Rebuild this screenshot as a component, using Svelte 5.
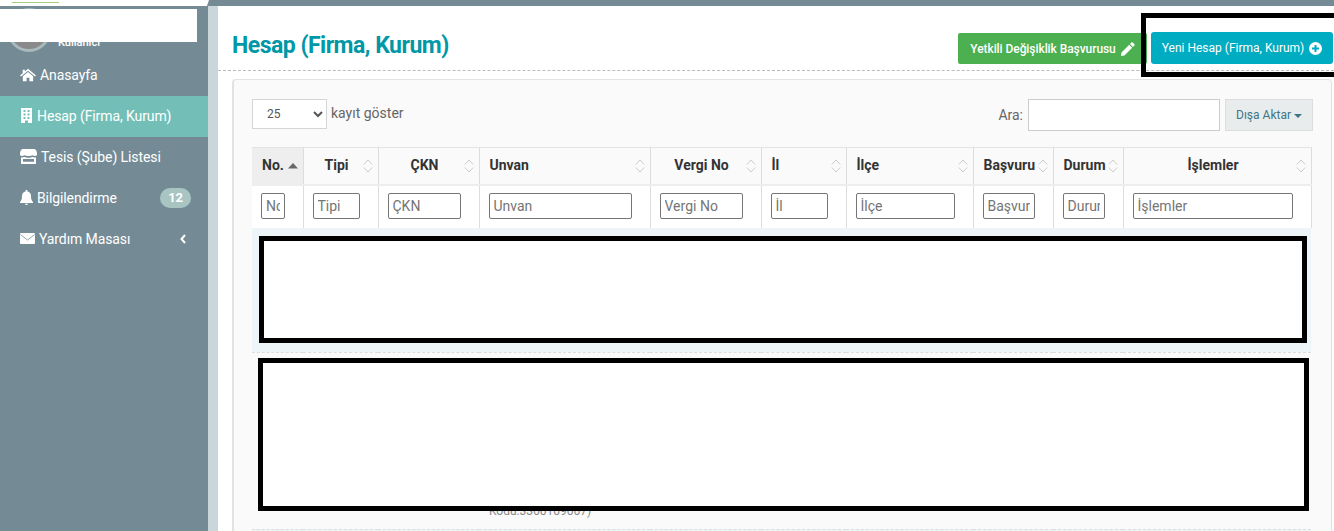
<script>
  const menu = [
    { label: 'Anasayfa', icon: 'home' },
    { label: 'Hesap (Firma, Kurum)', icon: 'building', active: true },
    { label: 'Tesis (Şube) Listesi', icon: 'store' },
    { label: 'Bilgilendirme', icon: 'bell', badge: 12 },
    { label: 'Yardım Masası', icon: 'mail', arrow: true }
  ];

  const columns = [
    { label: 'No.', width: 51, ph: 'No', left: true, sorted: true },
    { label: 'Tipi', width: 75, ph: 'Tipi' },
    { label: 'ÇKN', width: 101, ph: 'ÇKN' },
    { label: 'Unvan', width: 171, ph: 'Unvan', left: true },
    { label: 'Vergi No', width: 111, ph: 'Vergi No' },
    { label: 'İl', width: 85, ph: 'İl', left: true },
    { label: 'İlçe', width: 127, ph: 'İlçe', left: true },
    { label: 'Başvuru', width: 80, ph: 'Başvuru', left: true },
    { label: 'Durum', width: 70, ph: 'Durum', left: true },
    { label: 'İşlemler', width: 188, ph: 'İşlemler' }
  ];
</script>

<div class="page">
  <div class="topbar">
    <div class="brand"><span class="brand-line"></span></div>
  </div>

  <div class="layout">
    <aside class="sidebar">
      <div class="profile">
        <div class="avatar"></div>
        <span class="username">Kullanıcı</span>
      </div>
      <div class="profile-mask"></div>

      <nav>
        {#each menu as item}
          <a class="menu-item" class:active={item.active} href="#top">
            {#if item.icon === 'home'}
              <svg width="16" height="14" viewBox="0 0 18 14"><path d="M9 0l9 7.500-1.200 1.300L9 2.300 1.200 8.800 0 7.500l3-2.500V1h2.500v2z" /><path d="M3.200 8.400L9 3.600l5.800 4.800V14h-4.200v-4H7.400v4H3.200z" /></svg>
            {:else if item.icon === 'building'}
              <svg width="13" height="15" viewBox="0 0 13 15"><path fill-rule="evenodd" d="M1 0h11v15H8V12.500H5V15H1zM3.500 2v2h2V2zm4 0v2h2V2zM3.500 5.500v2h2v-2zm4 0v2h2v-2zM3.500 9v2h2V9zm4 0v2h2V9z" /></svg>
            {:else if item.icon === 'store'}
              <svg width="17" height="15" viewBox="0 0 17 15"><path d="M3 0h11c1.600 0 3 1.800 3 4.500v1.800C15.500 7.300 14 7.300 12.700 6.300 11 7.300 6 7.300 4.300 6.300 3 7.300 1.500 7.300 0 6.300V4.500C0 1.800 1.400 0 3 0z" /><path fill-rule="evenodd" d="M1 8.200c1.100.4 2.300.3 3.300-.2 2 .9 6.400.9 8.400 0 1 .5 2.200.6 3.300.2V15H1zM3 10v2.800h11V10z" /></svg>
            {:else if item.icon === 'bell'}
              <svg width="13" height="15" viewBox="0 0 13 15"><path d="M6.500 0c.6 0 1 .4 1 1v.6C9.600 2 11 3.700 11 6c0 3.500.7 4.800 2 6v1H0v-1c1.300-1.200 2-2.500 2-6 0-2.300 1.400-4 3.500-4.400V1c0-.6.400-1 1-1zM4.800 13.800h3.400c0 .7-.8 1.200-1.700 1.200s-1.700-.5-1.700-1.200z" /></svg>
            {:else}
              <svg width="15" height="11" viewBox="0 0 15 11"><rect width="15" height="11" rx="1" /><path class="fold" d="M.3 1.500L7.500 7l7.200-5.500" /></svg>
            {/if}
            <span>{item.label}</span>
            {#if item.badge}
              <span class="badge">{item.badge}</span>
            {/if}
            {#if item.arrow}
              <svg class="arrow" width="6" height="10" viewBox="0 0 6 10"><path d="M5 1L1.500 5 5 9" /></svg>
            {/if}
          </a>
        {/each}
      </nav>
    </aside>

    <div class="gutter"></div>

    <main class="content">
      <header class="head">
        <h1>Hesap (Firma, Kurum)</h1>
        <div class="actions">
          <button class="btn green">
            Yetkili Değişiklik Başvurusu
            <svg width="14" height="14" viewBox="0 0 14 14"><path d="M10.400.6a1 1 0 0 1 1.400 0l1.600 1.600a1 1 0 0 1 0 1.400L12 5 9 2zM8.200 2.800l3 3-7.700 7.700L0 14l.5-3.500z" /></svg>
          </button>
          <button class="btn teal">
            Yeni Hesap (Firma, Kurum)
            <svg width="13" height="13" viewBox="0 0 13 13"><path fill-rule="evenodd" d="M6.500 0a6.500 6.500 0 1 1 0 13 6.500 6.500 0 0 1 0-13zM5.500 3v2.500H3v2h2.500V10h2V7.500H10v-2H7.500V3z" /></svg>
          </button>
        </div>
      </header>
      <div class="action-mask"></div>

      <section class="card">
        <div class="toolbar">
          <div class="length">
            <select><option>25</option></select>
            <span>kayıt göster</span>
          </div>
          <div class="search">
            <span>Ara:</span>
            <input type="text" />
            <button class="export">Dışa Aktar <i class="caret"></i></button>
          </div>
        </div>

        <table>
          <colgroup>
            {#each columns as col}
              <col style="width: {col.width}px" />
            {/each}
          </colgroup>
          <thead>
            <tr class="titles">
              {#each columns as col}
                <th class:left={col.left} class:sorted={col.sorted}>
                  {col.label}
                  {#if col.sorted}
                    <svg class="sort" width="10" height="6" viewBox="0 0 10 6"><path class="solid" d="M5 0l5 5.500H0z" /></svg>
                  {:else}
                    <svg class="sort" width="10" height="14" viewBox="0 0 10 14"><path d="M.8 5.500L5 1l4.200 4.500M.8 8.500L5 13l4.200-4.500" /></svg>
                  {/if}
                </th>
              {/each}
            </tr>
            <tr class="filters">
              {#each columns as col}
                <td><input type="text" placeholder={col.ph} /></td>
              {/each}
            </tr>
          </thead>
          <tbody>
            <tr class="odd">
              <td colspan="10"><div class="hidden-first"></div></td>
            </tr>
            <tr>
              <td colspan="10">
                <div class="hidden-second"></div>
                <div class="row-rest">Kodu:3360109067)</div>
              </td>
            </tr>
            <tr class="odd"><td colspan="10" class="tail"></td></tr>
          </tbody>
        </table>
      </section>
    </main>
  </div>
</div>

<style>
  :global(body) {
    margin: 0;
    font-family: Roboto, "Liberation Sans", sans-serif;
    background: #fff;
  }

  .page {
    width: 1334px;
    height: 531px;
    overflow: hidden;
    display: flex;
    flex-direction: column;
  }

  .topbar {
    height: 6px;
    background: #748b96;
    flex: none;
  }
  .brand {
    width: 209px;
    height: 6px;
    background: #fff;
    clip-path: polygon(0 0, 100% 0, 99% 100%, 0 100%);
  }
  .brand-line {
    display: block;
    width: 47px;
    height: 1px;
    margin-left: 12px;
    position: relative;
    top: 2px;
    background: #a5cf7d;
  }

  .layout {
    flex: 1;
    display: flex;
    min-height: 0;
  }

  .sidebar {
    width: 208px;
    flex: none;
    background: #748b96;
    position: relative;
  }
  .profile {
    height: 49px;
    display: flex;
    align-items: flex-end;
    padding-left: 7px;
    box-sizing: border-box;
    overflow: hidden;
  }
  .avatar {
    width: 44px;
    height: 44px;
    border-radius: 50%;
    background: #8a8a8a;
    border: 3px solid #a9b9bd;
    box-sizing: border-box;
    margin-bottom: 3px;
    flex: none;
  }
  .username {
    color: #fff;
    font-size: 11px;
    font-weight: 500;
    margin: 0 0 6px 7px;
  }
  .profile-mask {
    position: absolute;
    left: 0;
    top: 3px;
    width: 197px;
    height: 33px;
    background: #fff;
  }

  .menu-item {
    height: 41px;
    box-sizing: border-box;
    display: flex;
    align-items: center;
    gap: 4px;
    padding: 0 17px 2px 20px;
    color: #fff;
    font-size: 14px;
    letter-spacing: -0.1px;
    text-decoration: none;
  }
  .menu-item svg {
    fill: #fff;
    flex: none;
  }
  .menu-item .fold {
    fill: none;
    stroke: #748b96;
    stroke-width: 0.8;
  }
  .menu-item.active {
    background: #73bfb8;
  }
  .badge {
    margin-left: auto;
    width: 31px;
    height: 20px;
    border-radius: 10px;
    background: #a8c5c2;
    font-size: 13px;
    font-weight: 700;
    line-height: 20px;
    text-align: center;
  }
  .menu-item .arrow {
    margin-left: auto;
    margin-right: 5px;
    fill: none;
    stroke: #fff;
    stroke-width: 2;
  }

  .gutter {
    width: 10px;
    flex: none;
    background: #c9d6da;
  }

  .content {
    flex: 1;
    min-width: 0;
    position: relative;
    background: #fff;
  }
  .head {
    height: 65px;
    box-sizing: border-box;
    padding: 26px 1px 0 14px;
    display: flex;
    justify-content: space-between;
    align-items: flex-start;
    border-bottom: 1px dashed #bbb;
  }
  h1 {
    margin: 1px 0 0;
    font-size: 23px;
    line-height: 26px;
    font-weight: 700;
    letter-spacing: -0.5px;
    color: #0097a7;
  }
  .actions {
    display: flex;
    gap: 4px;
    align-items: flex-end;
  }
  .btn {
    border: 0;
    color: #fff;
    font-family: inherit;
    font-size: 12px;
    font-weight: 500;
    display: flex;
    align-items: center;
    gap: 5px;
    padding: 0;
    justify-content: center;
  }
  .btn svg {
    fill: #fff;
  }
  .green {
    width: 189px;
    height: 31px;
    background: #4caf50;
    border-radius: 2px;
    letter-spacing: -0.07px;
  }
  .teal {
    width: 182px;
    height: 32px;
    background: #00acc1;
    border-radius: 3px;
    font-weight: 400;
  }
  .action-mask {
    position: absolute;
    left: 923px;
    top: 7px;
    width: 193px;
    height: 64px;
    box-sizing: border-box;
    border: 5px solid #000;
    border-right-width: 0;
    pointer-events: none;
  }

  .card {
    margin: 8px 2px 0 14px;
    height: 500px;
    box-sizing: border-box;
    border: 1px solid #e2e2e2;
    border-left-width: 2px;
    border-radius: 4px 4px 0 0;
    background: #fafafa;
    padding: 19px 0 0 18px;
  }

  .toolbar {
    display: flex;
    justify-content: space-between;
    align-items: flex-start;
    height: 48px;
    width: 1061px;
    font-size: 14px;
    color: #666;
  }
  .length {
    display: flex;
    align-items: center;
    gap: 4px;
    height: 30px;
  }
  .length span {
    margin-top: -2px;
  }
  select {
    width: 75px;
    height: 30px;
    padding-left: 10px;
    font-family: inherit;
    font-size: 12px;
    color: #555;
    background: #fff;
    border: 1px solid #d5d5d5;
    border-radius: 0;
  }
  .search {
    display: flex;
    align-items: center;
    height: 32px;
  }
  .search input {
    width: 192px;
    height: 32px;
    box-sizing: border-box;
    margin: 0 5px;
    border: 1px solid #ccc;
    background: #fff;
  }
  .export {
    width: 88px;
    height: 32px;
    border: 1px solid #ddd;
    background: #e9ecec;
    color: #3f7585;
    font-family: inherit;
    font-size: 12px;
    padding: 0;
  }
  .caret {
    display: inline-block;
    vertical-align: middle;
    border-top: 4px solid #3f7585;
    border-left: 4px solid transparent;
    border-right: 4px solid transparent;
  }

  table {
    table-layout: fixed;
    width: 1059px;
    border-collapse: collapse;
    font-size: 14px;
  }
  .titles th {
    position: relative;
    height: 37px;
    box-sizing: border-box;
    padding: 0 18px 2px 10px;
    border-top: 1px solid #e3e3e3;
    border-right: 1px solid #ddd;
    border-bottom: 2px solid #eee;
    font-weight: 700;
    color: #333;
    text-align: center;
    white-space: nowrap;
  }
  .titles th.left {
    text-align: left;
  }
  .titles th.sorted {
    background: #eee;
  }
  .sort {
    position: absolute;
    right: 5px;
    top: 11px;
    fill: none;
    stroke: #ccc;
  }
  .sorted .sort {
    top: 15px;
  }
  .sort .solid {
    fill: #666;
    stroke: none;
  }

  .filters td {
    height: 43px;
    box-sizing: border-box;
    padding: 0 18px 1px 9px;
    border-right: 1px solid #ddd;
    background: #fff;
  }
  .filters input {
    display: block;
    width: 100%;
    height: 26px;
    box-sizing: border-box;
    padding: 1px 4px;
    font-family: inherit;
    font-size: 14px;
    border: 1px solid #767676;
    border-radius: 2px;
    background: #fff;
  }
  .filters input::placeholder {
    color: #757575;
  }

  tbody td {
    padding: 0;
    border-bottom: 1px dashed #ddd;
  }
  .odd td {
    background: #eef5f8;
  }
  .hidden-first {
    height: 107px;
    box-sizing: border-box;
    margin: 8px 4px 9px 7px;
    border: 5px solid #000;
    background: #fff;
  }
  .hidden-second {
    position: relative;
    height: 153px;
    box-sizing: border-box;
    margin: 5px 2px 0 6px;
    border: 5px solid #000;
    background: #fff;
  }
  .row-rest {
    height: 25px;
    margin-top: -7px;
    padding-left: 237px;
    font-size: 12px;
    line-height: 14px;
    color: #888;
  }
  .tail {
    height: 20px;
  }
</style>
